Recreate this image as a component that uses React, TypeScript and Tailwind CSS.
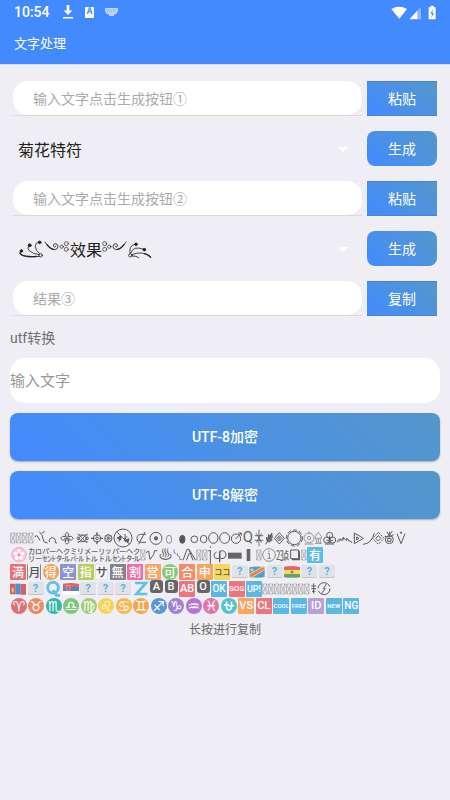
import React from "react";

const GRADIENT = "bg-linear-45 from-[#448aff] to-[#5596ca] text-white";
const CJK = "font-[Noto_Sans_CJK_SC,sans-serif]";

function StatusBar() {
  return (
    <div className="flex h-6 items-center justify-between pr-3 pl-[14px]">
      <div className="flex items-center">
        <span className="w-[48px] text-[14px] leading-6 font-medium">10:54</span>
        <svg className="h-[14px] w-3" viewBox="0 0 12 14" aria-hidden="true">
          <path d="M4.700 0h2.600v5.500h3L6 10 1.700 5.500h3zM1 12h10v1.500H1z" fill="#fff" />
        </svg>
        <span className="ml-[11px] flex h-[11px] w-[9px] items-center justify-center rounded-[1px] bg-white text-[9px] font-bold text-[#448aff]">
          A
        </span>
        <svg className="ml-[11px] h-2 w-[13px]" viewBox="0 0 39 24" aria-hidden="true">
          <path d="M0 0h39v10l-6 9h-6v5H12v-5H6l-6-9z" fill="#bcd6ff" />
          <path d="M4 5h31M6 11h27" stroke="#629cff" strokeWidth="2.500" strokeDasharray="3 3" />
        </svg>
      </div>
      <svg className="h-[15px] w-[48px]" viewBox="0 0 144 45" aria-hidden="true">
        <path d="M4 12Q27-2 51 12L28 41z" fill="#fff" />
        <path d="M58 43h25V16z" fill="#fff" />
        <path d="M83 43h10V7L83 16z" fill="#8ab6ff" />
        <path d="M116 7h6V2h9v5h6v36h-21z" fill="#fff" />
        <path d="M129 12l-8 14h5l-2 12 8-14h-5z" fill="#448aff" />
      </svg>
    </div>
  );
}

function PillInput({ hint }: { hint: string }) {
  return (
    <div className="min-w-0 flex-1 border-b border-[#dadadd]">
      <input
        type="text"
        aria-label={hint}
        placeholder={hint}
        className={`${CJK} block h-[34px] w-full rounded-[15px] bg-white px-5 text-[14px] text-[#333] outline-none placeholder:text-[#aaa]`}
      />
    </div>
  );
}

function ActionButton({ children, round = false }: { children: string; round?: boolean }) {
  return (
    <button
      type="button"
      className={`${GRADIENT} ${CJK} h-[35px] w-[70px] shrink-0 text-[14px] ${
        round ? "rounded-lg" : "border-y border-[#4a83cf]"
      }`}
    >
      {children}
    </button>
  );
}

function Caret() {
  return (
    <svg
      className="pointer-events-none absolute top-[16px] right-[14px] h-[5px] w-[10px]"
      viewBox="0 0 10 5"
      aria-hidden="true"
    >
      <path d="M0 0h10L5 5z" fill="#fff" />
    </svg>
  );
}

function OrnamentLeft() {
  return (
    <svg
      className="pointer-events-none absolute top-[8px] left-[5px] h-[22px] w-[52px]"
      viewBox="54 137 156 66"
      fill="none"
      stroke="#222"
      strokeWidth="2.500"
      strokeLinecap="round"
      aria-hidden="true"
    >
      <path d="M63 174q-8 5 0 11 20 10 55 4M86 158q-6 6 2 14 10 10 29 12M114 147q-8 1-8 12 0 12 13 22" />
      <path d="M60 179q8 13 50 10" strokeWidth="3.500" />
      <g fill="#222">
        <circle cx="64" cy="173" r="4" />
        <circle cx="89" cy="156" r="4.500" />
        <circle cx="119" cy="147" r="4" />
      </g>
      <circle cx="122" cy="186" r="5" />
      <path d="M135 146q16 24 29 23 11-1 10-11-2-8-9-7-7 2-4 8 4 5 7 0" />
      <path d="M141 154q10 13 20 14" strokeWidth="4" />
      <g strokeWidth="2">
        <circle cx="185" cy="160" r="5" />
        <circle cx="199" cy="151" r="6" />
        <circle cx="199" cy="168" r="6" />
      </g>
    </svg>
  );
}

function OrnamentRight() {
  return (
    <svg
      className="pointer-events-none absolute top-[8px] left-[89px] h-[22px] w-[52px]"
      viewBox="306 137 156 66"
      fill="none"
      stroke="#222"
      strokeWidth="2.500"
      strokeLinecap="round"
      aria-hidden="true"
    >
      <g strokeWidth="2">
        <circle cx="314" cy="151" r="6" />
        <circle cx="314" cy="168" r="6" />
        <circle cx="328" cy="160" r="5" />
      </g>
      <path d="M378 146q-16 24-29 23-11-1-10-11 2-8 9-7 7 2 4 8-4 5-7 0" />
      <path d="M372 154q-10 13-20 14" strokeWidth="4" />
      <circle cx="391" cy="186" r="5" />
      <path d="M390 180q-4-23 14-27M392 180q7-25 39-12M396 184q31-14 56 7M397 188q13-1 19 5" />
      <g fill="#222">
        <circle cx="408" cy="153" r="4" />
        <circle cx="433" cy="169" r="4" />
      </g>
      <path d="M434 181q12 3 18 11" strokeWidth="4" />
    </svg>
  );
}

function Mark({ w, units, children }: { w: string; units: number; children: React.ReactNode }) {
  return (
    <svg
      className={`h-[17px] shrink-0 overflow-visible ${w}`}
      viewBox={`0 0 ${units} 51`}
      fill="none"
      stroke="#5c5c5c"
      strokeWidth="3"
      aria-hidden="true"
    >
      {children}
    </svg>
  );
}

function Missing({ count }: { count: number }) {
  return (
    <>
      {Array.from({ length: count }, (_, i) => (
        <Mark key={i} w="w-[6px]" units={18}>
          <path d="M2 12h13v30H2zM2 12l13 30M15 12L2 42" strokeWidth="1.500" stroke="#888" />
        </Mark>
      ))}
    </>
  );
}

function SymbolRow() {
  return (
    <div className="flex h-[17px] items-center leading-[17px]">
      <Missing count={4} />
      <Mark w="w-[25px]" units={75}>
        <path d="M2 23l7-3 9 14M16 8q11 10 11 22 1 12 14 12M24 12l8-4M46 31q8-9 15-3 5 5 3 13l5 1M46 31v8" />
      </Mark>
      <Mark w="w-[16px]" units={48}>
        <path d="M24 10q9 4 4 13 10-5 15 5-5 9-15 4 5 9-4 14-9-5-4-14-10 5-15-4 5-10 15-5-5-9 4-13zM16 28h16M24 20v16" />
      </Mark>
      <Mark w="w-[15px]" units={45}>
        <path d="M9 14l28 28M37 14L9 42M11 28q12-18 24 0-12 18-24 0M8 18h30M8 38h30" strokeWidth="2.500" />
        <circle cx="10" cy="28" r="4" />
        <circle cx="36" cy="28" r="4" />
      </Mark>
      <Mark w="w-[14px]" units={42}>
        <circle cx="21" cy="28" r="11" />
        <path d="M21 10v10M21 36v10M3 28h10M29 28h10" strokeWidth="4" />
        <circle cx="21" cy="28" r="4" />
      </Mark>
      <Mark w="w-[9px]" units={27}>
        <circle cx="13" cy="28" r="11" />
        <path d="M13 17v22M2 28h22M6 20l15 16M21 20L6 36" strokeWidth="2" />
      </Mark>
      <Mark w="w-[20px]" units={60}>
        <circle cx="30" cy="27" r="27" />
        <path d="M10 8l40 38M19 22v16M12 27h14M36 15v18M42 22l-9 11" />
        <path d="M13 27l10-6v12zM34 35l14-6-3 11z" fill="#666" />
      </Mark>
      <Mark w="w-[16px]" units={48}>
        <path d="M39 16H25q-13 0-13 12t13 12h14M36 9L17 46" />
      </Mark>
      <Mark w="w-[14px]" units={42}>
        <circle cx="21" cy="28" r="18" />
        <circle cx="21" cy="28" r="5" fill="#666" />
      </Mark>
      <Mark w="w-[12px]" units={36}>
        <ellipse cx="18" cy="31" rx="8" ry="12" strokeWidth="2" />
      </Mark>
      <Mark w="w-[15px]" units={45}>
        <ellipse cx="22" cy="31" rx="8" ry="12" fill="#555" />
      </Mark>
      <Mark w="w-[9px]" units={27}><circle cx="13" cy="31" r="10" /></Mark>
      <Mark w="w-[8px]" units={24}><ellipse cx="14" cy="30" rx="10" ry="11" /></Mark>
      <Mark w="w-[12px]" units={36}><ellipse cx="19" cy="27" rx="14" ry="16" /></Mark>
      <Mark w="w-[11px]" units={33}><ellipse cx="17" cy="27" rx="15" ry="16" /></Mark>
      <Mark w="w-[12px]" units={36}>
        <circle cx="18" cy="29" r="14" />
        <path d="M17 30l16-18M25 12h9v8" />
      </Mark>
      <span className="w-[12px] shrink-0 text-center text-[15px]">Q</span>
      <Mark w="w-[10px]" units={30}>
        <path d="M15 2v50M2 20h26M2 34h26M7 13l16 28M23 13L7 41" strokeWidth="2.500" />
      </Mark>
      <Mark w="w-[10px]" units={30}>
        <path d="M5 46L24 12M10 38l-3-14 5 8 2-16 4 10 5-13 2 12-6 7 6 1-10 6z" fill="#777" />
      </Mark>
      <Mark w="w-[11px]" units={33}>
        <path d="M16 11l15 17-15 17L1 28zM16 20l8 8-8 8-8-8z" />
        <circle cx="16" cy="28" r="2" />
      </Mark>
      <Mark w="w-[19px]" units={57}>
        <circle cx="28" cy="27" r="20" />
        <circle cx="28" cy="27" r="24" strokeDasharray="12 6" strokeWidth="3" />
      </Mark>
      <Mark w="w-[10px]" units={30}>
        <circle cx="15" cy="27" r="15" stroke="#999" />
        <circle cx="15" cy="27" r="5" stroke="#999" />
        <path d="M15 8v8M1 45h28" stroke="#999" />
      </Mark>
      <Mark w="w-[9px]" units={27}>
        <path d="M4 28v-6l9-12 9 12v6zM7 29v14M13 29v14M19 29v14M3 43h21" stroke="#999" />
      </Mark>
      <Mark w="w-[13px]" units={39}>
        <circle cx="20" cy="19" r="9" />
        <circle cx="11" cy="33" r="9" />
        <circle cx="29" cy="33" r="9" />
        <path d="M20 20v24M10 34h20M6 45h28" />
      </Mark>
      <Mark w="w-[17px]" units={51}>
        <path d="M3 40q6-16 14-6 3-16 11-2 7-9 10 4 7-3 10 6M9 38l5-7M20 35l3-8M30 36l4-7" />
      </Mark>
      <Mark w="w-[10px]" units={30}>
        <path d="M4 12v32l27-16zM11 24v9l7-5z" />
      </Mark>
      <Mark w="w-[10px]" units={30}>
        <path d="M0 46q26-2 34-34" />
      </Mark>
      <Mark w="w-[11px]" units={33}>
        <path d="M16 10l17 18-17 18L-1 28z" strokeDasharray="7 3" />
        <path d="M16 20l8 8-8 8-8-8z" />
      </Mark>
      <Mark w="w-[11px]" units={33}>
        <circle cx="16" cy="32" r="12" />
        <path d="M16 22V8M8 8l8 11 9-13M2 22l12 2 15-7M11 28h10v9H11z" />
      </Mark>
      <Mark w="w-[12px]" units={36}>
        <path d="M6 14l12 30 12-30" />
        <circle cx="18" cy="11" r="2" fill="#666" />
      </Mark>
    </div>
  );
}

function KanaRow() {
  return (
    <div className="flex h-[17px] items-center leading-[17px]">
      <Mark w="w-[18px]" units={54}>
        <circle cx="27" cy="26" r="22" fill="#f7c3da" stroke="#f5b3d0" />
        <g fill="#fff" stroke="#f094bd" strokeWidth="1.500">
          <circle cx="27" cy="16" r="8" />
          <circle cx="17" cy="23" r="8" />
          <circle cx="37" cy="23" r="8" />
          <circle cx="21" cy="35" r="8" />
          <circle cx="33" cy="35" r="8" />
        </g>
        <circle cx="27" cy="27" r="4" fill="#ee7fae" stroke="none" />
      </Mark>
      <span className="w-[112px] shrink-0 font-[Noto_Sans_CJK_JP,sans-serif] text-[14px] whitespace-nowrap">
        ㌍㌫㌶㍊㍍㍑㌫㌶
      </span>
      <Missing count={1} />
      <Mark w="w-[12px]" units={36}>
        <path d="M0 20l8-5 4 25q14-14 14-26h8" />
      </Mark>
      <span className="w-[15px] shrink-0 text-center text-[14px]">♨</span>
      <Mark w="w-[10px]" units={30}>
        <path d="M3 10v10l6 2M13 21v8l6 2M20 31v9l8 1" strokeWidth="2" />
      </Mark>
      <Mark w="w-[13px]" units={39}>
        <path d="M0 43l12-33h6l20 33M10 43l9-22M18 11l12 32" />
      </Mark>
      <Missing count={2} />
      <Mark w="w-[5px]" units={15}>
        <path d="M7 12v43M7 1v4M1 14h6" />
      </Mark>
      <Mark w="w-[14px]" units={42}>
        <path d="M11 18q-9 3-8 12 2 9 12 8 5-1 5-6V16q6-3 12-1 8 4 7 12-2 11-12 11-6 0-7-6" />
        <path d="M20 16v33" strokeWidth="4" />
      </Mark>
      <Mark w="w-[17px]" units={51}>
        <path d="M3 20h41v18H3z" fill="#666" stroke="none" />
      </Mark>
      <Mark w="w-[12px]" units={36}>
        <path d="M8 9h11v36H8z" fill="#666" stroke="none" />
      </Mark>
      <Missing count={1} />
      <Mark w="w-[14px]" units={42}>
        <circle cx="21" cy="27" r="19" stroke="#888" />
        <path d="M17 22h5v15M16 37h11M21 14v4" stroke="#888" />
      </Mark>
      <span className="w-[13px] shrink-0 font-[Noto_Sans_CJK_JP,sans-serif] text-[13px]">㍯</span>
      <Mark w="w-[12px]" units={36}>
        <path d="M5 12h24v26H5z" />
        <path d="M31 16v25H9" strokeWidth="4" />
      </Mark>
      <Missing count={1} />
      <Tile tone={`${CJK} bg-[#5fbce6] text-white`}>有</Tile>
    </div>
  );
}

function Tile({ tone, children, size = "text-[12px]", w = "w-[16px]", shape = "rounded-[1px]" }: {
  tone: string;
  children: React.ReactNode;
  size?: string;
  w?: string;
  shape?: string;
}) {
  return (
    <span
      className={`flex h-[16px] shrink-0 items-center justify-center leading-[16px] font-medium ${tone} ${size} ${w} ${shape}`}
    >
      {children}
    </span>
  );
}

function Unknown() {
  return (
    <span className="flex h-[13px] w-4 shrink-0 items-center justify-center rounded-[2px] border-b border-[#c3c5cb] bg-[#e1e2e7] font-[Roboto,sans-serif] text-[11px] leading-[13px] font-bold text-[#58b3df]">
      ?
    </span>
  );
}

function Flag({ children }: { children: React.ReactNode }) {
  return (
    <svg className="h-3 w-4 shrink-0" viewBox="0 0 48 36" aria-hidden="true">
      {children}
    </svg>
  );
}

const SIGNS: [string, string][] = [
  ["♈", "bg-[#df7078]"],
  ["♉", "bg-[#ed8b69]"],
  ["♏", "bg-[#36b5a9]"],
  ["♎", "bg-[#7fc67f]"],
  ["♍", "bg-[#9fcb79]"],
  ["♌", "bg-[#f7d354]"],
  ["♋", "bg-[#f5b84f]"],
  ["♊", "bg-[#f3a650]"],
  ["♐", "bg-[#5a98d3]"],
  ["♑", "bg-[#a182d0]"],
  ["♒", "bg-[#b377ce]"],
  ["♓", "bg-[#df76a8]"],
];

const WORDS: [string, string, string][] = [
  ["VS", "bg-[#f6a660]", "text-[11px]"],
  ["CL", "bg-[#ea7880]", "text-[11px]"],
  ["COOL", "bg-[#5cb8e2]", "text-[6px]"],
  ["FREE", "bg-[#5cb8e2]", "text-[6px]"],
  ["ID", "bg-[#b8a0dc]", "text-[11px]"],
  ["NEW", "bg-[#5cb8e2]", "text-[6px]"],
  ["NG", "bg-[#5cb8e2]", "text-[10px]"],
];

function LetterTile({ children }: { children: string }) {
  return (
    <span className="flex h-[13px] w-[13px] shrink-0 items-center justify-center self-start rounded-[3px] bg-[#666] text-[11px] leading-[13px] font-medium text-white">
      {children}
    </span>
  );
}

function SymbolBoard() {
  return (
    <section aria-label="特殊符号" className="mx-[10px] mt-[10px] text-[#666]">
      <SymbolRow />
      <KanaRow />
      <div className={`${CJK} flex h-[17px] w-[325px] items-center justify-between`}>
        <Tile tone="bg-[#e37379] text-white">満</Tile>
        <Tile tone="border-x border-[#888] text-[#555]" w="w-[14px]">月</Tile>
        <Tile tone="bg-[#f3a052] text-white" shape="rounded-full">得</Tile>
        <Tile tone="bg-[#8e94d3] text-white">空</Tile>
        <Tile tone="bg-[#b9cc60] text-white">指</Tile>
        <Tile tone="border border-[#e4e4e6] bg-[#f7f7f7] text-[#555]" w="w-[13px]">サ</Tile>
        <Tile tone="bg-[#858585] text-white">無</Tile>
        <Tile tone="bg-[#ec70a5] text-white">割</Tile>
        <Tile tone="bg-[#f7a464] text-white">営</Tile>
        <Tile tone="bg-[#8bc77d] text-white" shape="rounded-full">可</Tile>
        <Tile tone="bg-[#f58c68] text-white">合</Tile>
        <Tile tone="bg-[#f8a35f] text-white">申</Tile>
        <Tile tone="bg-[#f4d763] text-[#555]" size="text-[8px]">ココ</Tile>
        <Unknown />
        <Flag>
          <path d="M1 4q23-5 46 0v29q-23 4-46 0z" fill="#4f9fe0" />
          <path d="M1 33V25L40 3h7v8L8 34z" fill="#e77e68" stroke="#f5d867" strokeWidth="3" />
          <path d="M9 5l2 5h5l-4 3 2 5-5-3-5 3 2-5-4-3h5z" fill="#f5d867" />
        </Flag>
        <Unknown />
        <Flag>
          <path d="M0 2q24-4 48 1v10H0z" fill="#e26864" />
          <path d="M0 12h48v12H0z" fill="#f4dc62" />
          <path d="M0 24h48v10q-24 3-48 0z" fill="#68a06c" />
          <path d="M24 13l5 5-5 5-5-5z" fill="#777" />
        </Flag>
        <Unknown />
        <Unknown />
      </div>
      <div className="flex h-[17px] items-center">
        <div className="flex w-[252px] shrink-0 items-center justify-between">
          <Flag>
            <path d="M0 2h16v32H0zM32 3h16v32H32z" fill="#d95f62" />
            <path d="M16 2h16v32H16z" fill="#5090cb" />
            <path d="M5 14h6v14H5z" fill="#f1c95a" />
          </Flag>
          <Unknown />
          <Mark w="w-[16px]" units={48}>
            <circle cx="24" cy="23" r="16" stroke="#62c1e7" strokeWidth="9" />
            <path d="M23 31q8 4 11 15h11" stroke="#62c1e7" strokeWidth="8" />
          </Mark>
          <Flag>
            <path d="M0 2q24-4 48 1v10H0z" fill="#d9666a" />
            <path d="M0 12h48v12H0z" fill="#5c83bd" />
            <path d="M0 24h48v10q-24 3-48 0z" fill="#fff" />
            <path d="M10 8h11v12l-5 5-6-5z" fill="#df5d60" stroke="#fff" />
          </Flag>
          <Unknown />
          <Unknown />
          <Unknown />
          <Mark w="w-[16px]" units={48}>
            <path d="M6 9h33L10 42h33" stroke="#62c1e7" strokeWidth="8" />
          </Mark>
          <LetterTile>A</LetterTile>
          <LetterTile>B</LetterTile>
          <Tile tone="bg-[#eb777d] text-white" size="text-[11px]">AB</Tile>
          <LetterTile>O</LetterTile>
          <Tile tone="bg-[#5cb8e2] text-white" size="text-[10px]">OK</Tile>
          <Tile tone="bg-[#eb777d] text-white" size="text-[8px]">SOS</Tile>
          <Tile tone="bg-[#5cb8e2] text-white" size="text-[9px]">UP!</Tile>
        </div>
        <Missing count={8} />
        <Mark w="w-[7px]" units={21}>
          <path d="M11 10v31M4 18h14M4 26h14M6 34h10" strokeWidth="3" />
        </Mark>
        <Mark w="w-[14px]" units={42}>
          <circle cx="21" cy="26" r="18" strokeDasharray="48 8" />
          <path d="M28 12l-9 14h6l-11 14" />
        </Mark>
      </div>
      <div className="grid h-[17px] w-[350px] grid-cols-20 items-center justify-items-center">
        {SIGNS.map(([sign, tone]) => (
          <Tile
            key={sign}
            tone={`${tone} font-[DejaVu_Sans,sans-serif] text-white`}
            shape="rounded-full"
            size="text-[14px]"
          >
            {sign + "\uFE0E"}
          </Tile>
        ))}
        <Tile tone="bg-[#55c3cb]" shape="rounded-full">
          <svg className="h-3 w-3" viewBox="0 0 24 24" aria-hidden="true">
            <path d="M7 3v9q0 8 5 8t5-8V3M2 11q5-4 10 0t10-1" fill="none" stroke="#fff" strokeWidth="3" />
          </svg>
        </Tile>
        {WORDS.map(([word, tone, size]) => (
          <Tile key={word} tone={`${tone} text-white`} size={size}>
            {word}
          </Tile>
        ))}
      </div>
    </section>
  );
}

function WideButton({ children }: { children: string }) {
  return (
    <button
      type="button"
      className={`${GRADIENT} h-12 rounded-lg text-[14px] font-medium shadow-[0_1px_2px_rgba(0,0,0,0.3)]`}
    >
      {children}
    </button>
  );
}

export default function App() {
  return (
    <div className="min-h-screen bg-[#efeef4] font-[Roboto,Noto_Sans_CJK_SC,DejaVu_Sans,sans-serif]">
      <header className="h-[65px] border-b border-[#c9dcfb] bg-[#448aff] text-white">
        <StatusBar />
        <h1 className="px-[14px] text-[13px] leading-10 font-normal">文字处理</h1>
      </header>

      <main>
        <div className="flex flex-col gap-[15px] px-[13px] pt-4">
          <div className="flex gap-[5px]">
            <PillInput hint="输入文字点击生成按钮①" />
            <ActionButton>粘贴</ActionButton>
          </div>
          <div className="flex gap-[5px]">
            <div className="relative min-w-0 flex-1">
              <select
                aria-label="特符样式"
                className={`${CJK} h-[35px] w-full appearance-none bg-transparent pl-[5px] text-[16px] text-[#222] outline-none`}
              >
                <option>菊花特符</option>
              </select>
              <Caret />
            </div>
            <ActionButton round>生成</ActionButton>
          </div>
          <div className="flex gap-[5px]">
            <PillInput hint="输入文字点击生成按钮②" />
            <ActionButton>粘贴</ActionButton>
          </div>
          <div className="flex gap-[5px]">
            <div className="relative min-w-0 flex-1">
              <select
                aria-label="效果样式"
                className={`${CJK} h-[35px] w-full appearance-none bg-transparent pl-[57px] text-[16px] text-[#222] outline-none`}
              >
                <option>效果</option>
              </select>
              <OrnamentLeft />
              <OrnamentRight />
              <Caret />
            </div>
            <ActionButton round>生成</ActionButton>
          </div>
          <div className="flex gap-[5px]">
            <PillInput hint="结果③" />
            <ActionButton>复制</ActionButton>
          </div>
        </div>

        <div className="mt-3 flex flex-col gap-[10px] px-[10px]">
          <label htmlFor="utf" className="text-[14px] leading-5 text-[#707070]">
            utf转换
          </label>
          <input
            id="utf"
            type="text"
            placeholder="输入文字"
            className="h-[45px] w-full rounded-[15px] bg-white text-[15px] text-[#333] outline-none placeholder:text-[#999]"
          />
          <WideButton>UTF-8加密</WideButton>
          <WideButton>UTF-8解密</WideButton>
        </div>

        <SymbolBoard />
        <p className="mt-[6px] text-center text-[12px] leading-5 text-[#6b6b6b]">长按进行复制</p>
      </main>
    </div>
  );
}
